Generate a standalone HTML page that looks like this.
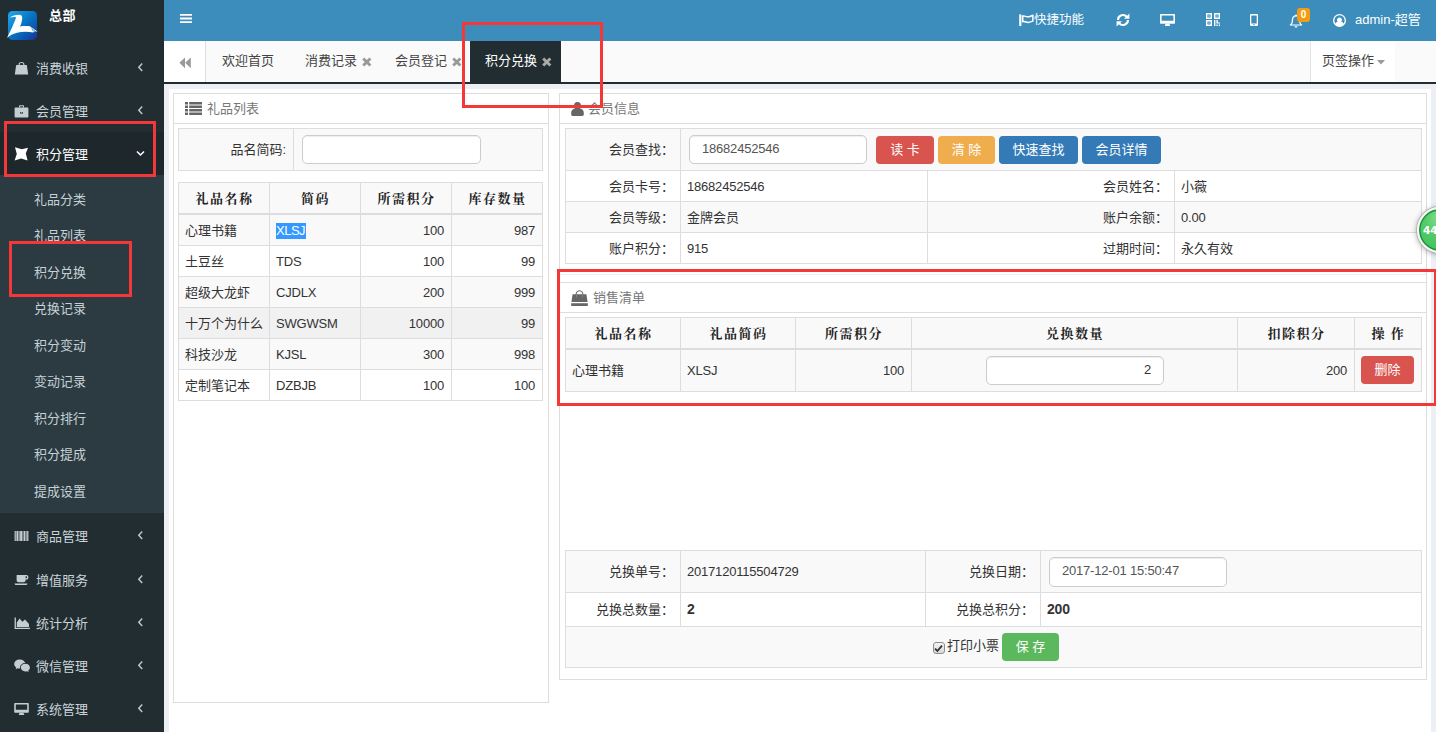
<!DOCTYPE html>
<html lang="zh-CN">
<head>
<meta charset="utf-8">
<title>积分兑换</title>
<style>
*{box-sizing:border-box;}
html,body{margin:0;padding:0;}
body{width:1436px;height:732px;overflow:hidden;position:relative;background:#ecf0f5;font-family:"Liberation Sans","Noto Sans CJK SC",sans-serif;font-size:13px;color:#333;line-height:1;}
.abs{position:absolute;}
/* sidebar */
#sidebar{position:absolute;left:0;top:0;width:164px;height:732px;background:#222d32;}
#logo{position:absolute;left:8px;top:11px;width:29px;height:29px;}
#org{position:absolute;left:49px;top:9px;color:#fff;font-weight:bold;font-size:13px;line-height:14px;letter-spacing:0.5px;}
.mi{position:absolute;left:0;width:164px;height:43px;color:#c9d4d9;font-size:13px;}
.mi .tx{position:absolute;left:36px;top:16px;line-height:14px;letter-spacing:0px;}
.mi svg.ic{position:absolute;left:14px;top:15px;width:15px;height:14px;fill:#c3cdd2;}
.mi .ar{position:absolute;left:137px;top:16px;width:7px;height:11px;}
.mi.act{background:#1e282c;color:#fff;}
#sub{position:absolute;left:0;top:175px;width:164px;height:338px;background:#2c3b41;}
.si{position:absolute;left:34px;color:#c6d0d6;font-size:13px;line-height:14px;}

/* header */
#hdr{position:absolute;left:164px;top:0;width:1272px;height:41px;background:#3c8dbc;color:#fff;}
#hdr svg{position:absolute;fill:#fff;}
#hdr .t{position:absolute;font-size:13px;line-height:14px;white-space:nowrap;}
#badge{position:absolute;left:1133px;top:8px;width:13px;height:14px;background:#f39c12;border-radius:3px;color:#fff;font-size:10px;line-height:14px;text-align:center;font-weight:bold;}
/* tabs */
#tabs{position:absolute;left:164px;top:41px;width:1272px;height:43px;background:#fafafa;border-bottom:2px solid #222d32;}
#tabs .t{position:absolute;top:0;height:41px;line-height:40px;font-size:13px;color:#444;white-space:nowrap;}
#tabs .x{display:inline-block;width:10px;height:10px;margin-left:5px;vertical-align:-2px;}
#tback{position:absolute;left:0;top:0;width:42px;height:41px;background:#fff;border-right:1px solid #ddd;}
#tact{position:absolute;left:306px;top:0;width:91px;height:41px;background:#222d32;}
#tops{position:absolute;left:1146px;top:0;width:85px;height:41px;background:#fff;border-left:1px solid #e4e4e4;}

/* content */
#wrap{position:absolute;left:169px;top:89px;width:1262px;height:643px;background:#fff;}
.panel{position:absolute;border:1px solid #ddd;background:#fff;}
.ph{position:absolute;left:0;top:0;right:0;height:30px;border-bottom:1px solid #ddd;color:#777;font-size:13px;}
.ph .t{position:absolute;top:8px;line-height:14px;}
table{border-collapse:collapse;position:absolute;table-layout:fixed;font-size:13px;}
td,th{border:1px solid #ddd;padding:0 7px 0 6px;overflow:hidden;white-space:nowrap;line-height:14px;}
th{letter-spacing:1.5px;padding:0 6px 0 7px;font-weight:bold;text-align:center;background:#f9f9f9;border-bottom:2px solid #ddd;font-family:"Liberation Serif","Noto Serif CJK SC",serif;color:#222;}
.g{background:#f9f9f9;}
tr.s td,tr.s th{padding-top:2px;}
tr.s td.k{padding-top:0;}
.n{letter-spacing:-0.2px;}
.r{text-align:right;}
.inp{display:inline-block;border:1px solid #ccc;border-radius:5px;background:#fff;height:29px;line-height:25px;padding:0 12px;color:#555;vertical-align:middle;box-shadow:inset 0 1px 1px rgba(0,0,0,.075);}
.btn{position:relative;top:0.5px;display:inline-block;height:28px;line-height:28px;border-radius:4px;color:#fff;text-align:center;vertical-align:middle;font-size:13px;}
.sel{background:#3399ff;color:#fff;display:inline-block;line-height:16px;letter-spacing:-0.5px !important;padding-right:0.5px;}

.red{position:absolute;border:3px solid #f43838;}
#ball{position:absolute;left:1417px;top:207px;width:46px;height:46px;border-radius:50%;background:radial-gradient(circle at 50% 22%,#86e08e 0,#52cb68 40%,#3fc257 100%);border:2px solid #f6f6f6;box-shadow:0 0 0 1px #b5b5b5,0 1px 6px rgba(0,0,0,.4),inset 0 0 0 1.5px #1c8f3c;color:#fff;font-weight:bold;font-size:10.5px;line-height:42px;padding-left:4px;font-family:"DejaVu Sans","Liberation Sans",sans-serif;}
</style>
</head>
<body>
<div id="sidebar">
  <svg id="logo" viewBox="0 0 29 29" style="overflow:visible">
    <defs><linearGradient id="lg" x1="0" y1="0" x2="1" y2="1"><stop offset="0" stop-color="#22aaee"/><stop offset="0.45" stop-color="#0878c8"/><stop offset="0.8" stop-color="#0a50a8"/><stop offset="1" stop-color="#2a2896"/></linearGradient></defs>
    <rect x="0" y="0" width="29" height="29" rx="4.5" fill="url(#lg)"/>
    <path d="M1.8 6.6 C4 4.8 8 3.6 11.4 3.8 C13.4 4 14.4 5 14.2 7.4 C14 10.5 13 13.5 11.9 15.4 C15 14.9 19 14.8 21.8 15.2 L26.4 18.2 L29.6 20.8 L26.8 20.2 L25.2 21.6 C20 20.5 14 20.6 9 21.8 C5 22.8 1.5 24.6 -1 27 C1 23 4 17 6.2 11.3 C7 9.3 7.8 7.5 8.1 6.2 C6 5.8 3.8 6 1.8 6.6 Z" fill="#fff"/>
    <path d="M23.6 16.6 L25.4 20.6 M25.6 18 L26.8 20.4" stroke="#0a5cb0" stroke-width="0.6" fill="none"/>
  </svg>
  <div id="org">总部</div>

  <div class="mi" style="top:46px"><svg class="ic" viewBox="0 0 15 14"><path d="M4.6 4.2 V3.2 C4.6 0.2 10.4 0.2 10.4 3.2 V4.2 H9.3 V3.3 C9.3 1.5 5.7 1.5 5.7 3.3 V4.2 Z"/><path d="M2.2 4 H12.8 L14.2 13.6 H0.8 Z"/></svg><span class="tx">消费收银</span><svg class="ar" viewBox="0 0 7 11"><path d="M5.2 1.6 L1.8 5.3 L5.2 9" fill="none" stroke="#b8c7ce" stroke-width="1.5"/></svg></div>
  <div class="mi" style="top:89px"><svg class="ic" viewBox="0 0 15 14"><path d="M5 3.6 V2.2 C5 1.6 5.4 1.2 6 1.2 H9 C9.6 1.2 10 1.6 10 2.2 V3.6 H8.9 V2.3 H6.1 V3.6 Z"/><path d="M1.6 3.4 H13.4 C14 3.4 14.4 3.8 14.4 4.4 V12.4 C14.4 13 14 13.4 13.4 13.4 H1.6 C1 13.4 0.6 13 0.6 12.4 V4.4 C0.6 3.8 1 3.4 1.6 3.4 Z M6 8 V9.6 H9 V8 H8.2 V8.8 H6.8 V8 Z" fill-rule="evenodd"/></svg><span class="tx">会员管理</span><svg class="ar" viewBox="0 0 7 11"><path d="M5.2 1.6 L1.8 5.3 L5.2 9" fill="none" stroke="#b8c7ce" stroke-width="1.5"/></svg></div>
  <div class="mi act" style="top:132px"><svg class="ic" viewBox="0 0 15 14" style="fill:#fff"><path d="M1 0.2 L7.8 2.2 L14 0.8 L11.8 6.6 L13.6 13.6 L7.2 11.6 L0.6 13.4 L2.8 7 Z"/></svg><span class="tx">积分管理</span><svg class="ar" viewBox="0 0 9 7" style="left:136px;top:18px;width:9px;height:7px"><path d="M1 1.4 L4.5 5 L8 1.4" fill="none" stroke="#fff" stroke-width="1.5"/></svg></div>
  <div id="sub">
    <div class="si" style="top:18px">礼品分类</div>
    <div class="si" style="top:54px">礼品列表</div>
    <div class="si" style="top:91px">积分兑换</div>
    <div class="si" style="top:127px">兑换记录</div>
    <div class="si" style="top:164px">积分变动</div>
    <div class="si" style="top:200px">变动记录</div>
    <div class="si" style="top:237px">积分排行</div>
    <div class="si" style="top:273px">积分提成</div>
    <div class="si" style="top:310px">提成设置</div>
  </div>
  <div class="mi" style="top:514px"><svg class="ic" viewBox="0 0 15 14"><path d="M0.6 2 H1.8 V12 H0.6 Z M2.4 2 H4.4 V12 H2.4 Z M4.9 2 H5.6 V12 H4.9 Z M6.1 2 H8 V12 H6.1 Z M8.5 2 H9.2 V12 H8.5 Z M9.7 2 H11.5 V12 H9.7 Z M12 2 H12.6 V12 H12 Z M13.1 2 H14.4 V12 H13.1 Z"/></svg><span class="tx">商品管理</span><svg class="ar" viewBox="0 0 7 11"><path d="M5.2 1.6 L1.8 5.3 L5.2 9" fill="none" stroke="#b8c7ce" stroke-width="1.5"/></svg></div>
  <div class="mi" style="top:558px"><svg class="ic" viewBox="0 0 15 14"><path d="M2.6 2 H11.6 H12.6 C15 2 15 6.6 12.6 6.6 H11.6 V7.2 C11.6 8.4 10.8 9.2 9.6 9.2 H4.6 C3.4 9.2 2.6 8.4 2.6 7.2 Z M11.6 3.3 V5.3 H12.4 C13.3 5.3 13.3 3.3 12.4 3.3 Z" fill-rule="evenodd"/><path d="M0.6 10.4 H13.4 C13.4 11.4 12.6 12 11.6 12 H2.4 C1.4 12 0.6 11.4 0.6 10.4 Z"/></svg><span class="tx">增值服务</span><svg class="ar" viewBox="0 0 7 11"><path d="M5.2 1.6 L1.8 5.3 L5.2 9" fill="none" stroke="#b8c7ce" stroke-width="1.5"/></svg></div>
  <div class="mi" style="top:601px"><svg class="ic" viewBox="0 0 16 14" style="width:16px"><path d="M0.6 1.6 H1.9 V11.8 H16 V13 H0.6 Z"/><path d="M2.8 11 V6.6 L5.6 2.6 L8.4 5.8 L11 3.6 L15 8 V11 Z"/></svg><span class="tx">统计分析</span><svg class="ar" viewBox="0 0 7 11"><path d="M5.2 1.6 L1.8 5.3 L5.2 9" fill="none" stroke="#b8c7ce" stroke-width="1.5"/></svg></div>
  <div class="mi" style="top:644px"><svg class="ic" viewBox="0 0 16 14" style="width:16px"><path d="M5.8 0.4 C2.7 0.4 0.2 2.4 0.2 5 C0.2 6.4 1 7.7 2.2 8.5 L1.6 10.3 L3.7 9.2 C4.4 9.4 5.1 9.5 5.8 9.5 C5.9 9.5 6.1 9.5 6.2 9.5 C5.5 6.6 8 4 11.2 4.1 C10.7 2 8.5 0.4 5.8 0.4 Z"/><path d="M11.4 4.8 C8.8 4.8 6.8 6.5 6.8 8.6 C6.8 10.7 8.8 12.4 11.4 12.4 C12 12.4 12.5 12.3 13 12.2 L14.7 13.1 L14.2 11.6 C15.2 10.9 15.9 9.8 15.9 8.6 C15.9 6.5 13.9 4.8 11.4 4.8 Z"/></svg><span class="tx">微信管理</span><svg class="ar" viewBox="0 0 7 11"><path d="M5.2 1.6 L1.8 5.3 L5.2 9" fill="none" stroke="#b8c7ce" stroke-width="1.5"/></svg></div>
  <div class="mi" style="top:687px"><svg class="ic" viewBox="0 0 15 14"><path d="M1.2 1 H13.8 C14.4 1 14.8 1.4 14.8 2 V9.8 C14.8 10.4 14.4 10.8 13.8 10.8 H1.2 C0.6 10.8 0.2 10.4 0.2 9.8 V2 C0.2 1.4 0.6 1 1.2 1 Z M1.8 2.4 V7.8 H13.2 V2.4 Z" fill-rule="evenodd"/><path d="M5.6 10.8 H9.4 L10.4 13 H4.6 Z"/></svg><span class="tx">系统管理</span><svg class="ar" viewBox="0 0 7 11"><path d="M5.2 1.6 L1.8 5.3 L5.2 9" fill="none" stroke="#b8c7ce" stroke-width="1.5"/></svg></div>
</div>

<div id="hdr">
  <svg style="left:16px;top:14px;width:12px;height:9px" viewBox="0 0 12 9"><path d="M0 0 H12 V1.8 H0 Z M0 3.6 H12 V5.4 H0 Z M0 7.2 H12 V9 H0 Z"/></svg>
  <svg style="left:855px;top:14px;width:15px;height:12px" viewBox="0 0 15 12"><path d="M0.2 1 C0.2 0 2.4 0 2.4 1 V12 H0.2 Z"/><path d="M3 1.6 C5.2 0.4 7.2 2.4 9.6 2 C11 1.8 12.6 1 14.6 0.6 V7.6 C12.6 8.2 11 9 9.6 9.2 C7.2 9.4 5.2 7.4 3 8.6 Z M4.5 2.8 V6.8 C6.2 6.4 7.8 7.9 9.6 7.7 C10.8 7.6 12 7.1 13.1 6.7 V2.4 C12 2.8 10.8 3.4 9.6 3.5 C7.8 3.7 6.2 2.3 4.5 2.8 Z" fill-rule="evenodd"/></svg>
  <span class="t" style="left:870px;top:13px;font-size:12.5px">快捷功能</span>
  <svg style="left:952px;top:13px;width:14px;height:14px" viewBox="0 0 14 14"><path d="M2 7 A5 5 0 0 1 10.9 3.9 M12 7 A5 5 0 0 1 3.1 10.1" fill="none" stroke="#fff" stroke-width="2.1"/><path d="M13.4 0.4 V5.8 H8 Z M0.6 13.6 V8.2 H6 Z"/></svg>
  <svg style="left:996px;top:14px;width:15px;height:12px" viewBox="0 0 15 12"><path d="M1 0 H14 C14.6 0 15 0.4 15 1 V8.8 C15 9.4 14.6 9.8 14 9.8 H1 C0.4 9.8 0 9.4 0 8.8 V1 C0 0.4 0.4 0 1 0 Z M1.6 1.4 V6.8 H13.4 V1.4 Z" fill-rule="evenodd"/><path d="M5.6 9.8 H9.4 L10.2 12 H4.8 Z"/></svg>
  <svg style="left:1042px;top:13px;width:14px;height:13px" viewBox="0 0 14 13"><path d="M0 0 H6 V6 H0 Z M1.4 1.4 V4.6 H4.6 V1.4 Z M2.4 2.4 H3.6 V3.6 H2.4 Z M8 0 H14 V6 H8 Z M9.4 1.4 V4.6 H12.6 V1.4 Z M10.4 2.4 H11.6 V3.6 H10.4 Z M0 7 H6 V13 H0 Z M1.4 8.4 V11.6 H4.6 V8.4 Z M2.4 9.4 H3.6 V10.6 H2.4 Z M8 7 H9.4 V13 H8 Z M10.4 7 H11.8 V9.4 H14 V7 H14 V10.6 H10.4 Z M10.4 11.6 H11.8 V13 H10.4 Z M12.8 11.6 H14 V13 H12.8 Z" fill-rule="evenodd"/></svg>
  <svg style="left:1086px;top:14px;width:8px;height:12px" viewBox="0 0 8 12"><path d="M1.2 0 H6.8 C7.5 0 8 0.5 8 1.2 V10.8 C8 11.5 7.5 12 6.8 12 H1.2 C0.5 12 0 11.5 0 10.8 V1.2 C0 0.5 0.5 0 1.2 0 Z M1.3 1.6 V9.4 H6.7 V1.6 Z M3.3 10.2 V11.2 H4.7 V10.2 Z" fill-rule="evenodd"/></svg>
  <svg style="left:1125px;top:14px;width:14px;height:14px" viewBox="0 0 14 14"><path d="M7 0.4 C7.5 0.4 7.8 0.8 7.8 1.3 C10 1.8 11.2 3.6 11.2 6 C11.2 8.6 12 9.8 13.2 10.8 V11.6 H0.8 V10.8 C2 9.8 2.8 8.6 2.8 6 C2.8 3.6 4 1.8 6.2 1.3 C6.2 0.8 6.5 0.4 7 0.4 Z M7 2.4 C5.2 2.4 4.1 3.8 4.1 6 C4.1 8 3.6 9.4 2.8 10.4 H11.2 C10.4 9.4 9.9 8 9.9 6 C9.9 3.8 8.8 2.4 7 2.4 Z M5.4 12.2 H8.6 C8.6 14 5.4 14 5.4 12.2 Z" fill-rule="evenodd"/></svg>
  <div id="badge">0</div>
  <svg style="left:1169px;top:14px;width:13px;height:13px" viewBox="0 0 13 13"><path d="M6.5 0 A6.5 6.5 0 1 0 6.5 13 A6.5 6.5 0 1 0 6.5 0 Z M6.5 1.3 A5.2 5.2 0 0 1 10.6 9.7 C10.2 8.6 9 8 8.2 7.8 C9.8 6.4 8.8 3.4 6.5 3.4 C4.2 3.4 3.2 6.4 4.8 7.8 C4 8 2.8 8.6 2.4 9.7 A5.2 5.2 0 0 1 6.5 1.3 Z" fill-rule="evenodd"/></svg>
  <span class="t" style="left:1191px;top:13px">admin-超管</span>
</div>
<div id="tabs">
  <div id="tback"><svg style="position:absolute;left:15px;top:16px;width:12px;height:12px" viewBox="0 0 12 12"><path d="M6 0.4 V11.2 L0.4 5.8 Z M11.8 0.4 V11.2 L6.2 5.8 Z" fill="#999"/></svg></div>
  <div id="tact"></div>
  <span class="t" style="left:58px">欢迎首页</span>
  <span class="t" style="left:141px">消费记录<svg class="x" viewBox="0 0 10 10"><path d="M0.2 2.4 L2.2 0.4 L4.8 3 L7.4 0.4 L9.4 2.4 L6.8 5 L9.4 7.6 L7.4 9.6 L4.8 7 L2.2 9.6 L0.2 7.6 L2.8 5 Z" fill="#999"/></svg></span>
  <span class="t" style="left:231px">会员登记<svg class="x" viewBox="0 0 10 10"><path d="M0.2 2.4 L2.2 0.4 L4.8 3 L7.4 0.4 L9.4 2.4 L6.8 5 L9.4 7.6 L7.4 9.6 L4.8 7 L2.2 9.6 L0.2 7.6 L2.8 5 Z" fill="#999"/></svg></span>
  <span class="t" style="left:321px;color:#fff">积分兑换<svg class="x" viewBox="0 0 10 10"><path d="M0.2 2.4 L2.2 0.4 L4.8 3 L7.4 0.4 L9.4 2.4 L6.8 5 L9.4 7.6 L7.4 9.6 L4.8 7 L2.2 9.6 L0.2 7.6 L2.8 5 Z" fill="#aaa"/></svg></span>
  <div id="tops"><span class="t" style="left:11px">页签操作</span><svg style="position:absolute;left:66px;top:19px;width:8px;height:5px" viewBox="0 0 8 5"><path d="M0 0 H8 L4 4.6 Z" fill="#999"/></svg></div>
</div>

<div id="wrap"></div>
<div class="panel" style="left:173px;top:93px;width:376px;height:610px">
  <div class="ph"><svg style="position:absolute;left:11px;top:8px;width:17px;height:13px" viewBox="0 0 17 13"><path d="M0 0 H3 V2.4 H0 Z M4.2 0 H17 V2.4 H4.2 Z M0 3.5 H3 V5.9 H0 Z M4.2 3.5 H17 V5.9 H4.2 Z M0 7 H3 V9.4 H0 Z M4.2 7 H17 V9.4 H4.2 Z M0 10.5 H3 V12.9 H0 Z M4.2 10.5 H17 V12.9 H4.2 Z" fill="#666"/></svg><span class="t" style="left:33px">礼品列表</span></div>
  <table style="left:4px;top:34px;width:365px"><tr class="g" style="height:42px"><td class="r" style="width:115px">品名简码:</td><td><span class="inp" style="width:179px;margin-left:2px"></span></td></tr></table>
  <table style="left:4px;top:88px;width:365px">
    <tr class="s" style="height:31px"><th style="width:91px">礼品名称</th><th style="width:91px">简码</th><th style="width:91px">所需积分</th><th>库存数量</th></tr>
<tr class="s g" style="height:32px"><td>心理书籍</td><td><span class="sel n">XLSJ</span></td><td class="n r">100</td><td class="n r">987</td></tr>
<tr class="s" style="height:31px"><td>土豆丝</td><td class="n">TDS</td><td class="n r">100</td><td class="n r">99</td></tr>
<tr class="s g" style="height:31px"><td>超级大龙虾</td><td class="n">CJDLX</td><td class="n r">200</td><td class="n r">999</td></tr>
<tr class="s" style="height:31px;background:#f1f1f1"><td>十万个为什么</td><td class="n">SWGWSM</td><td class="n r">10000</td><td class="n r">99</td></tr>
<tr class="s g" style="height:31px"><td>科技沙龙</td><td class="n">KJSL</td><td class="n r">300</td><td class="n r">998</td></tr>
<tr class="s" style="height:31px"><td>定制笔记本</td><td class="n">DZBJB</td><td class="n r">100</td><td class="n r">100</td></tr>
  </table>
</div>
<div class="panel" style="left:559px;top:93px;width:868px;height:587px">
  <div class="ph"><svg style="position:absolute;left:11px;top:8px;width:13px;height:14px" viewBox="0 0 13 14"><path d="M6.5 0 C8.8 0 10 1.6 10 3.6 C10 4.8 9.7 5.8 9.1 6.4 C11.4 7 12.8 8.4 12.8 10.8 V12.6 C12.8 13.4 12.2 14 11.4 14 H1.6 C0.8 14 0.2 13.4 0.2 12.6 V10.8 C0.2 8.4 1.6 7 3.9 6.4 C3.3 5.8 3 4.8 3 3.6 C3 1.6 4.2 0 6.5 0 Z" fill="#666"/></svg><span class="t" style="left:28px">会员信息</span></div>
  <table style="left:5px;top:34px;width:857px">
    <tr class="g" style="height:42px"><td class="r" style="width:115px;padding-right:6px">会员查找：</td><td colspan="3"><span class="inp n" style="width:178px;margin-left:2px">18682452546</span><span class="btn" style="background:#d9534f;width:58px;margin-left:9px">读 卡</span><span class="btn" style="background:#f0ad4e;width:57px;margin-left:4px">清 除</span><span class="btn" style="background:#337ab7;width:79px;margin-left:4px">快速查找</span><span class="btn" style="background:#337ab7;width:79px;margin-left:4px">会员详情</span></td></tr>
    <tr class="s" style="height:31px"><td class="r" style="padding-right:6px">会员卡号：</td><td class="n" style="width:247px">18682452546</td><td class="r" style="width:247px;padding-right:6px">会员姓名：</td><td>小薇</td></tr>
    <tr class="s g" style="height:31px"><td class="r" style="padding-right:6px">会员等级：</td><td>金牌会员</td><td class="r" style="padding-right:6px">账户余额：</td><td class="n">0.00</td></tr>
    <tr class="s" style="height:31px"><td class="r" style="padding-right:6px">账户积分：</td><td class="n">915</td><td class="r" style="padding-right:6px">过期时间：</td><td>永久有效</td></tr>
  </table>
  <div style="position:absolute;left:0;right:0;top:180px;height:1px;background:#eee"></div>
  <div style="position:absolute;left:0;right:0;top:188px;height:31px;border-top:1px solid #ddd;border-bottom:1px solid #ddd;color:#777"><svg style="position:absolute;left:11px;top:6px;width:18px;height:18px" viewBox="0 0 18 18"><path d="M4.6 9 V5.2 C4.6 -0.2 12.4 -0.2 12.4 5.2 V9 H11.2 V5.2 C11.2 1.4 5.8 1.4 5.8 5.2 V9 Z" fill="#777"/><path d="M1.6 5.2 H15.4 L16.6 13 H0.4 Z M5 5.2 V8.2 H5.6 V5.2 Z M11.4 5.2 V8.2 H12 V5.2 Z" fill="#666" fill-rule="evenodd"/><path d="M0.2 14.2 H16.8 V17 H0.2 Z" fill="#666"/></svg><span style="position:absolute;left:33px;top:8px;line-height:14px">销售清单</span></div>
  <table style="left:5px;top:223px;width:857px">
    <tr class="s" style="height:31px"><th style="width:115px">礼品名称</th><th style="width:115px">礼品简码</th><th style="width:116px">所需积分</th><th style="width:326px">兑换数量</th><th style="width:117px">扣除积分</th><th>操 作</th></tr>
    <tr class="s g" style="height:43px"><td>心理书籍</td><td class="n">XLSJ</td><td class="n r">100</td><td class="k" style="text-align:center"><span class="inp n" style="width:178px;margin-left:2px;text-align:right;padding-right:12px;height:29px;line-height:26px;color:#333;position:relative;top:0.5px">2</span></td><td class="n r">200</td><td class="k" style="padding:0 0 0 6px"><span class="btn" style="top:0;background:#d9534f;width:53px">删除</span></td></tr>
  </table>
  <table style="left:5px;top:456px;width:857px">
    <tr class="g" style="height:42px"><td class="r" style="width:115px;padding-right:6px">兑换单号：</td><td class="n" style="width:245px">2017120115504729</td><td class="r" style="width:115px;padding-right:6px">兑换日期：</td><td><span class="inp n" style="width:178px;margin-left:2px;height:30px;line-height:26px">2017-12-01 15:50:47</span></td></tr>
    <tr style="height:34px"><td class="r" style="padding-right:6px">兑换总数量：</td><td class="n" style="font-weight:bold;font-size:14px;padding-bottom:2px">2</td><td class="r" style="padding-right:6px">兑换总积分：</td><td class="n" style="font-weight:bold;font-size:14px;padding-bottom:2px">200</td></tr>
    <tr class="g" style="height:41px"><td colspan="4" style="text-align:center;padding-left:11px"><span style="display:inline-block;width:12px;height:12px;border:1px solid #8e8e8e;border-radius:3px;background:linear-gradient(#f4f4f4,#d8d8d8);vertical-align:middle;position:relative;top:1px;margin-left:1px;margin-right:2px"><svg style="position:absolute;left:0.5px;top:0.5px;width:9px;height:9px" viewBox="0 0 9 9"><path d="M1 4.6 L3.4 7 L8 1.6" fill="none" stroke="#333" stroke-width="1.8"/></svg></span><span style="vertical-align:middle;position:relative;top:-1px">打印小票</span><span class="btn" style="top:0;background:#5cb85c;width:57px;margin-left:3px">保 存</span></td></tr>
  </table>
</div>

<div class="red" style="left:4px;top:121px;width:152px;height:56px"></div>
<div class="red" style="left:9px;top:241px;width:123px;height:56px"></div>
<div class="red" style="left:462px;top:22px;width:141px;height:86px"></div>
<div class="red" style="left:557px;top:269px;width:880px;height:137px"></div>
<div id="ball">44</div>
</body>
</html>
